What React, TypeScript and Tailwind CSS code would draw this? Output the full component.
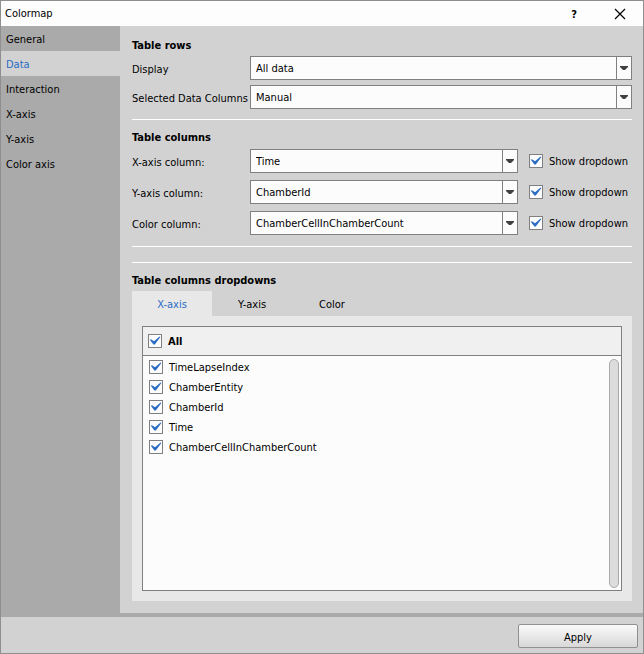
import { useId, useState } from "react";

const sections = ["General", "Data", "Interaction", "X-axis", "Y-axis", "Color axis"];
const columns = ["TimeLapseIndex", "ChamberEntity", "ChamberId", "Time", "ChamberCellInChamberCount"];
const tabs = ["X-axis", "Y-axis", "Color"];

function Select({ id, value, options }: { id: string; value: string; options: string[] }) {
  return (
    <div className="relative min-w-0 flex-1">
      <select
        id={id}
        defaultValue={value}
        className="block h-6 w-full appearance-none border border-[#808080] bg-[#fcfcfc] pt-0.5 pr-5 pl-[5px] outline-none"
      >
        {options.map((option) => (
          <option key={option}>{option}</option>
        ))}
      </select>
      <span className="pointer-events-none absolute inset-y-0 right-0 flex w-4 items-center justify-center border-l border-[#808080]">
        <svg width="9" height="4" viewBox="0 0 9 4" className="fill-[#404040]" aria-hidden="true">
          <path d="M0 0h8v1L5 4H3L0 1z" />
        </svg>
      </span>
    </div>
  );
}

function Check({ label, className = "" }: { label: string; className?: string }) {
  return (
    <label className={`flex items-center gap-1.5 ${className}`}>
      <span className="relative block size-3.5 shrink-0">
        <input
          type="checkbox"
          defaultChecked
          className="peer block size-3.5 appearance-none border border-[#808080] bg-[#fcfcfc]"
        />
        <svg
          viewBox="0 0 14 14"
          className="pointer-events-none absolute inset-0 hidden fill-[#2a6cc4] peer-checked:block"
          aria-hidden="true"
        >
          <path d="M1.6 5.6 3.4 5.4 6 7.2 11.6 2.6 12.4 2.9 6.8 10.6H5.4z" />
        </svg>
      </span>
      <span className="pt-0.5">{label}</span>
    </label>
  );
}

function Heading({ children }: { children: string }) {
  return <h2 className="h-4 leading-[18px] font-bold">{children}</h2>;
}

function Field({ label, value, options, toggle }: { label: string; value: string; options: string[]; toggle?: boolean }) {
  const id = useId();
  return (
    <div className="flex items-center">
      <label htmlFor={id} className="w-[118px] shrink-0 pt-1 whitespace-nowrap">
        {label}
      </label>
      <Select id={id} value={value} options={options} />
      {toggle && <Check label="Show dropdown" className="ml-[11px] w-[103px] shrink-0 whitespace-nowrap" />}
    </div>
  );
}

export default function App() {
  const [section, setSection] = useState("Data");
  const [tab, setTab] = useState("X-axis");

  return (
    <div className="flex min-h-screen flex-col border border-[#8f8f8f] bg-[#d2d2d2] font-['DejaVu_Sans_Condensed','DejaVu_Sans','Noto_Sans',sans-serif] text-[11px] leading-4 text-black">
      <header className="flex h-[25px] items-center bg-[#fdfdfd] pl-1">
        <h1 className="flex-1">Colormap</h1>
        <button type="button" aria-label="Help" className="flex h-full w-[46px] items-center justify-center pt-0.5 font-bold">
          ?
        </button>
        <button type="button" aria-label="Close" className="flex h-full w-[46px] items-center justify-center">
          <svg width="12" height="12" viewBox="0 0 12 12" className="stroke-black" strokeWidth="1.2" aria-hidden="true">
            <path d="M1 1l10 10M11 1 1 11" />
          </svg>
        </button>
      </header>

      <div className="flex flex-1 border-b-4 border-[#aaaaaa]">
        <nav className="flex w-[119px] shrink-0 flex-col bg-[#aaaaaa]">
          {sections.map((name) => (
            <button
              key={name}
              type="button"
              onClick={() => setSection(name)}
              className={`h-[25px] pt-0.5 pl-[5px] text-left ${section === name ? "bg-[#d2d2d2] text-[#2a6cc4]" : ""}`}
            >
              {name}
            </button>
          ))}
        </nav>

        <main className="flex min-w-0 flex-1 flex-col pt-[11px] pr-[11px] pb-3 pl-3">
          <Heading>Table rows</Heading>
          <div className="mt-[3px] flex flex-col gap-[5px]">
            <Field label="Display" value="All data" options={["All data", "Selected data"]} />
            <Field label="Selected Data Columns" value="Manual" options={["Manual", "Automatic"]} />
          </div>

          <hr className="mt-2.5 mb-[9px] border-white" />
          <Heading>Table columns</Heading>
          <div className="mt-1 flex flex-col gap-[7px]">
            <Field label="X-axis column:" value="Time" options={columns} toggle />
            <Field label="Y-axis column:" value="ChamberId" options={columns} toggle />
            <Field label="Color column:" value="ChamberCellInChamberCount" options={columns} toggle />
          </div>

          <hr className="mt-[11px] border-white" />
          <hr className="mt-[15px] mb-[9px] border-white" />
          <Heading>Table columns dropdowns</Heading>
          <div role="tablist" className="mt-[3px] flex">
            {tabs.map((name) => (
              <button
                key={name}
                type="button"
                role="tab"
                aria-selected={tab === name}
                onClick={() => setTab(name)}
                className={`h-[25px] w-20 pt-0.5 ${tab === name ? "bg-[#e8e8e8] text-[#2a6cc4]" : ""}`}
              >
                {name}
              </button>
            ))}
          </div>
          <div role="tabpanel" className="flex flex-1 flex-col bg-[#e8e8e8] p-2.5">
            <div className="flex flex-1 flex-col border border-[#808080] bg-[#fcfcfc]">
              <Check label="All" className="h-[29px] border-b border-[#808080] bg-[#f0f0f0] pl-[5px] font-bold" />
              <div className="flex flex-1 justify-between pr-0.5 pl-1.5">
                <div className="py-px">
                  {columns.map((name) => (
                    <Check key={name} label={name} className="h-5" />
                  ))}
                </div>
                <div className="mt-[3px] mb-0.5 w-2.5 rounded-full border border-[#aaaaaa] bg-[#dcdcdc]" />
              </div>
            </div>
          </div>
        </main>
      </div>

      <footer className="flex h-9 items-end justify-end pr-[5px] pb-[5px]">
        <button
          type="button"
          className="h-6 w-[120px] rounded-xs border border-[#909090] bg-linear-to-b from-[#fafafa] to-[#d8d8d8] pt-1"
        >
          Apply
        </button>
      </footer>
    </div>
  );
}
